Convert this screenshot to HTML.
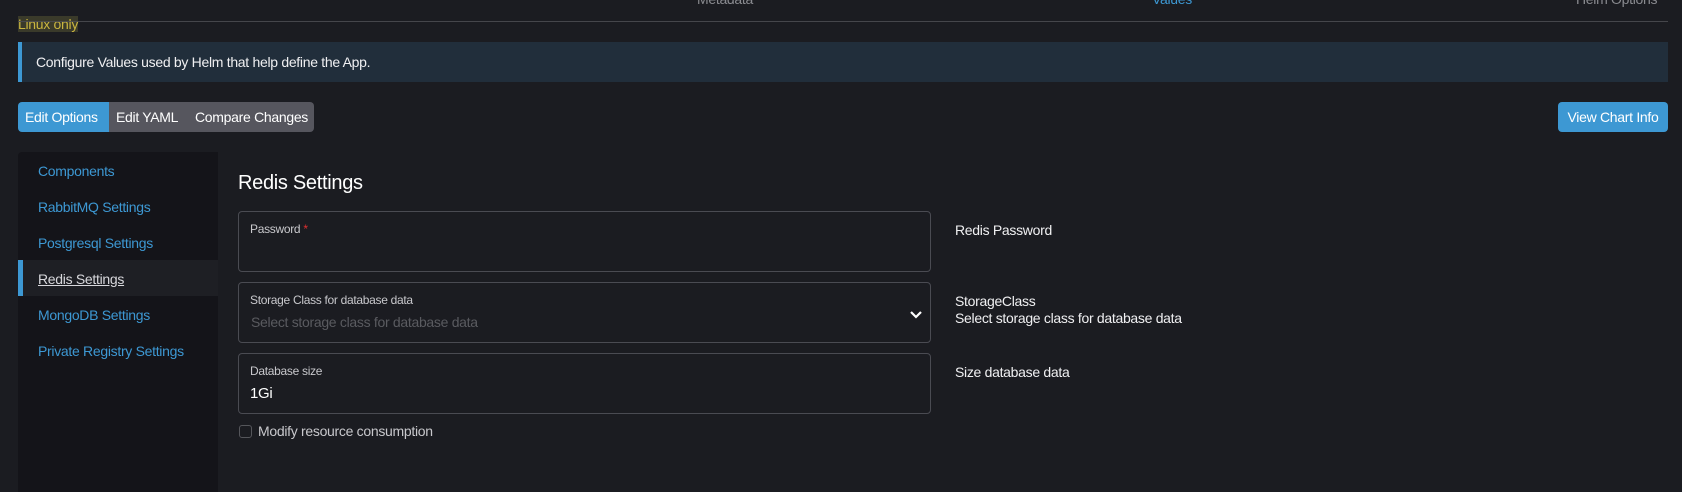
<!DOCTYPE html>
<html><head><meta charset="utf-8"><style>
*{box-sizing:border-box;margin:0;padding:0}
body{width:1682px;height:484px;background:#1b1c21;font-family:"Liberation Sans",sans-serif;color:#e8e8ea;position:relative;overflow:hidden;font-size:14px;letter-spacing:-0.3px}
.a{position:absolute;white-space:nowrap}
.tab{top:-9px;font-size:14px;color:#8a8b90}
.box{position:absolute;left:238px;width:693px;height:61px;border:1px solid #4a4b52;border-radius:4px}
.lbl{position:absolute;left:11px;top:10px;font-size:12px;color:#c8c8cc}
.side a{position:absolute;left:38px;color:#3d98d3;font-size:14px;text-decoration:none}
.desc{font-size:14px;color:#f0f0f2}
</style></head><body>
<div class="a tab" style="left:697px">Metadata</div>
<div class="a tab" style="left:1152px;color:#3d98d3">Values</div>
<div class="a tab" style="left:1576px">Helm Options</div>
<div class="a" style="left:18px;top:16px;height:16px;background:#3a3a2a;color:#c9b540;font-size:14px;line-height:16px">Linux only</div>
<div class="a" style="left:18px;top:21px;width:1650px;height:1px;background:#4a4b50;opacity:0.9"></div>
<div class="a" style="left:18px;top:42px;width:1650px;height:40px;background:#212e3b;border-left:4px solid #3d98d3;padding-left:14px;line-height:40px;font-size:14px;color:#f0f0f2">Configure Values used by Helm that help define the App.</div>
<div class="a" style="left:18px;top:102px;height:30px;border-radius:4px;overflow:hidden;display:flex;font-size:14px;line-height:30px">
<div style="background:#3d98d3;color:#fff;padding:0 7px;width:91px">Edit Options</div>
<div style="background:#56565e;color:#fff;padding:0 7px 0 7px;width:80px">Edit YAML</div>
<div style="background:#56565e;color:#fff;padding:0 8px 0 6px;width:125px">Compare Changes</div>
</div>
<div class="a" style="left:1558px;top:102px;width:110px;height:30px;background:#3d98d3;border-radius:4px;color:#fff;line-height:30px;text-align:center;font-size:14px">View Chart Info</div>
<div class="a side" style="left:18px;top:152px;width:200px;height:340px;background:#141419;border-radius:4px 0 0 0">
<div style="position:absolute;left:0;top:108px;width:200px;height:36px;background:#1e1f24;border-left:5px solid #3d98d3"></div>
<a style="left:20px;top:11px">Components</a>
<a style="left:20px;top:47px">RabbitMQ Settings</a>
<a style="left:20px;top:83px">Postgresql Settings</a>
<a style="left:20px;top:119px;color:#d8d8dc;text-decoration:underline">Redis Settings</a>
<a style="left:20px;top:155px">MongoDB Settings</a>
<a style="left:20px;top:191px">Private Registry Settings</a>
</div>
<div class="a" style="left:238px;top:172px;font-size:20px;color:#fff">Redis Settings</div>
<div class="box" style="top:211px"><div class="lbl">Password <span style="color:#e03030">*</span></div></div>
<div class="box" style="top:282px"><div class="lbl">Storage Class for database data</div>
<div style="position:absolute;left:12px;top:31px;font-size:14px;color:#5a5b60">Select storage class for database data</div>
<svg style="position:absolute;left:670px;top:27px" width="14" height="10" viewBox="0 0 14 10"><path d="M2 2 L7 7 L12 2" stroke="#fff" stroke-width="2.2" fill="none"/></svg></div>
<div class="box" style="top:353px"><div class="lbl">Database size</div>
<div style="position:absolute;left:11px;top:31px;font-size:15px;color:#fff">1Gi</div></div>
<div class="a" style="left:239px;top:425px;width:13px;height:13px;border:1px solid #55565b;border-radius:3px"></div>
<div class="a" style="left:258px;top:423px;font-size:14px;color:#c8c8cc">Modify resource consumption</div>
<div class="a desc" style="left:955px;top:222px">Redis Password</div>
<div class="a desc" style="left:955px;top:293px;line-height:17px">StorageClass<br>Select storage class for database data</div>
<div class="a desc" style="left:955px;top:364px">Size database data</div>
</body></html>
